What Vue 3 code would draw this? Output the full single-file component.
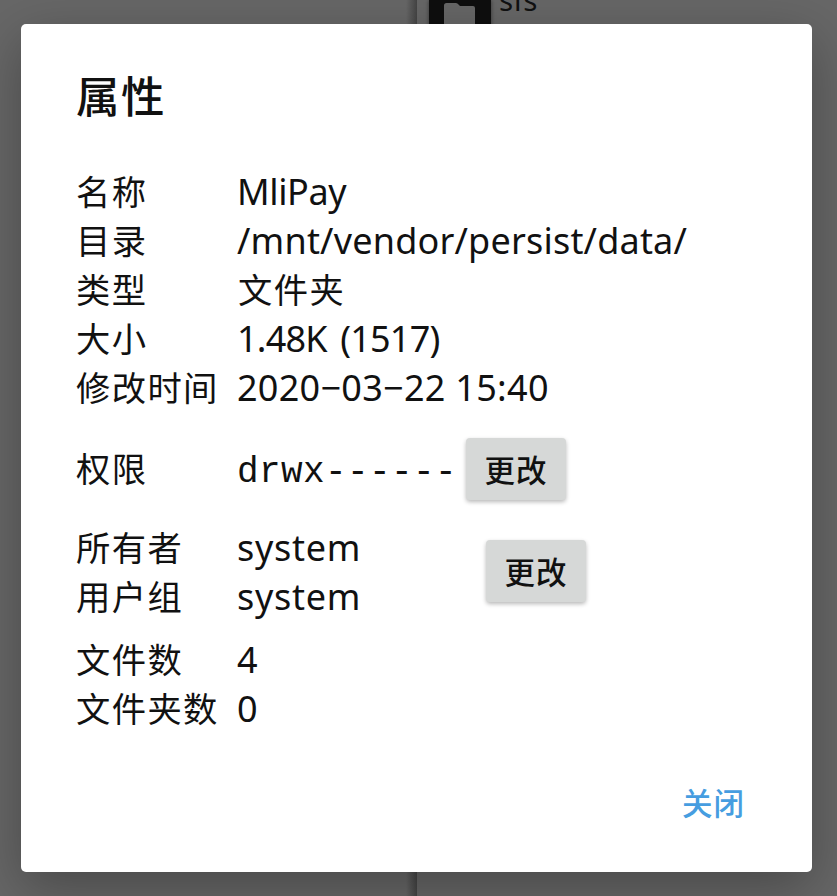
<script setup>
const details = [
  { label: '名称', value: 'MliPay', kind: 'name' },
  { label: '目录', value: '/mnt/vendor/persist/data/', kind: 'path' },
  { label: '类型', value: '文件夹', kind: 'cjk' },
  { label: '大小', value: '1.48K (1517)', kind: 'size' },
  { label: '修改时间', value: '2020−03−22 15:40', kind: 'date' },
]
const owners = [
  { label: '所有者', value: 'system' },
  { label: '用户组', value: 'system' },
]
const counts = [
  { label: '文件数', value: '4' },
  { label: '文件夹数', value: '0' },
]
</script>

<template>
  <main class="screen">
    <div class="backdrop">
      <div class="pane left"></div>
      <div class="pane right">
        <div class="tile">
          <svg width="32" height="26" viewBox="0 0 32 26"><path d="M0 26V2.5Q0 0 2.5 0H12Q13.5 0 14.5 1.5L16 3H29Q31 3 31 5V26Z" fill="#666" /></svg>
        </div>
        <span class="entry">sfs</span>
      </div>
    </div>
    <section class="dialog" role="dialog">
      <h1>属性</h1>
      <div class="group">
        <div v-for="r in details" :key="r.label" class="row">
          <span class="label">{{ r.label }}</span><span class="value" :class="r.kind">{{ r.value }}</span>
        </div>
      </div>
      <div class="row permission">
        <span class="label">权限</span><span class="value mono">drwx------</span>
        <button>更改</button>
      </div>
      <div class="owner">
        <div class="owner-rows">
          <div v-for="r in owners" :key="r.label" class="row">
            <span class="label">{{ r.label }}</span><span class="value system">{{ r.value }}</span>
          </div>
        </div>
        <button>更改</button>
      </div>
      <div class="group counts">
        <div v-for="r in counts" :key="r.label" class="row">
          <span class="label">{{ r.label }}</span><span class="value">{{ r.value }}</span>
        </div>
      </div>
      <footer><a class="close">关闭</a></footer>
    </section>
  </main>
</template>

<style>
body { margin: 0; overflow: hidden; }
</style>

<style scoped>
* { box-sizing: border-box; }
.screen {
  position: relative;
  width: 837px;
  height: 896px;
  padding: 24px 25px 24px 21px;
  overflow: hidden;
  background: #676767;
  color: #111;
  font-family: "Noto Sans", "Noto Sans CJK SC", sans-serif;
}
.backdrop { position: absolute; inset: 0; display: flex; }
.pane.left { width: 417px; background: linear-gradient(to left, #444, #676767 11px); }
.pane.right { flex: 1; display: flex; padding-left: 12px; align-items: flex-start; }
.tile {
  width: 62px;
  height: 48px;
  padding: 3px 0 0 15px;
  background: #0e0e0e;
  box-shadow: 0 0 4px rgba(0, 0, 0, .5);
}
.tile svg { display: block; }
.entry { margin: -20px 0 0 8px; font-size: 29.5px; line-height: 40px; }
.dialog {
  position: relative;
  width: 791px;
  height: 848px;
  padding: 42px 56px 0 55px;
  border-radius: 5px;
  background: #fff;
  box-shadow: 0 16px 54px rgba(0, 0, 0, .3);
}
h1 {
  margin: 0;
  height: 101px;
  font: 500 43.5px/58px "Noto Sans CJK SC", sans-serif;
  letter-spacing: 1.5px;
}
.row { display: flex; height: 49px; align-items: center; }
.label { width: 161px; flex: none; font: 34.3px/49px "Noto Sans CJK SC", sans-serif; letter-spacing: 1.4px; white-space: nowrap; padding-bottom: 3px; }
.value { font-size: 36px; line-height: 49px; white-space: pre; }
.name { letter-spacing: -.4px; }
.path { letter-spacing: .2px; }
.size { letter-spacing: -.8px; word-spacing: 5px; }
.date { letter-spacing: .28px; }
.system { letter-spacing: .7px; }
.cjk { font: 34.3px/49px "Noto Sans CJK SC", sans-serif; letter-spacing: 1.4px; padding: 0 0 3px 1px; }
.mono { font-family: "Liberation Mono", monospace; letter-spacing: .4px; padding-top: 6px; }
button {
  width: 100px;
  height: 62px;
  padding: 0;
  border: 0;
  border-radius: 4px;
  background: #d6d8d7;
  box-shadow: 0 2px 4px rgba(0, 0, 0, .28);
  color: #111;
  font: 500 30.5px/60px "Noto Sans CJK SC", sans-serif;
  letter-spacing: 1px;
}
.permission { height: 62px; margin-top: 26px; }
.permission .value { width: 229px; }
.owner { display: flex; align-items: center; height: 98px; margin-top: 23px; }
.owner-rows { width: 410px; }
.owner button { margin-bottom: 2px; }
.counts { margin-top: 14px; }
footer { display: flex; justify-content: flex-end; padding-right: 11px; margin-top: 44px; }
.close { color: #469de0; font: 500 30.5px/50px "Noto Sans CJK SC", sans-serif; letter-spacing: 1px; }
</style>
